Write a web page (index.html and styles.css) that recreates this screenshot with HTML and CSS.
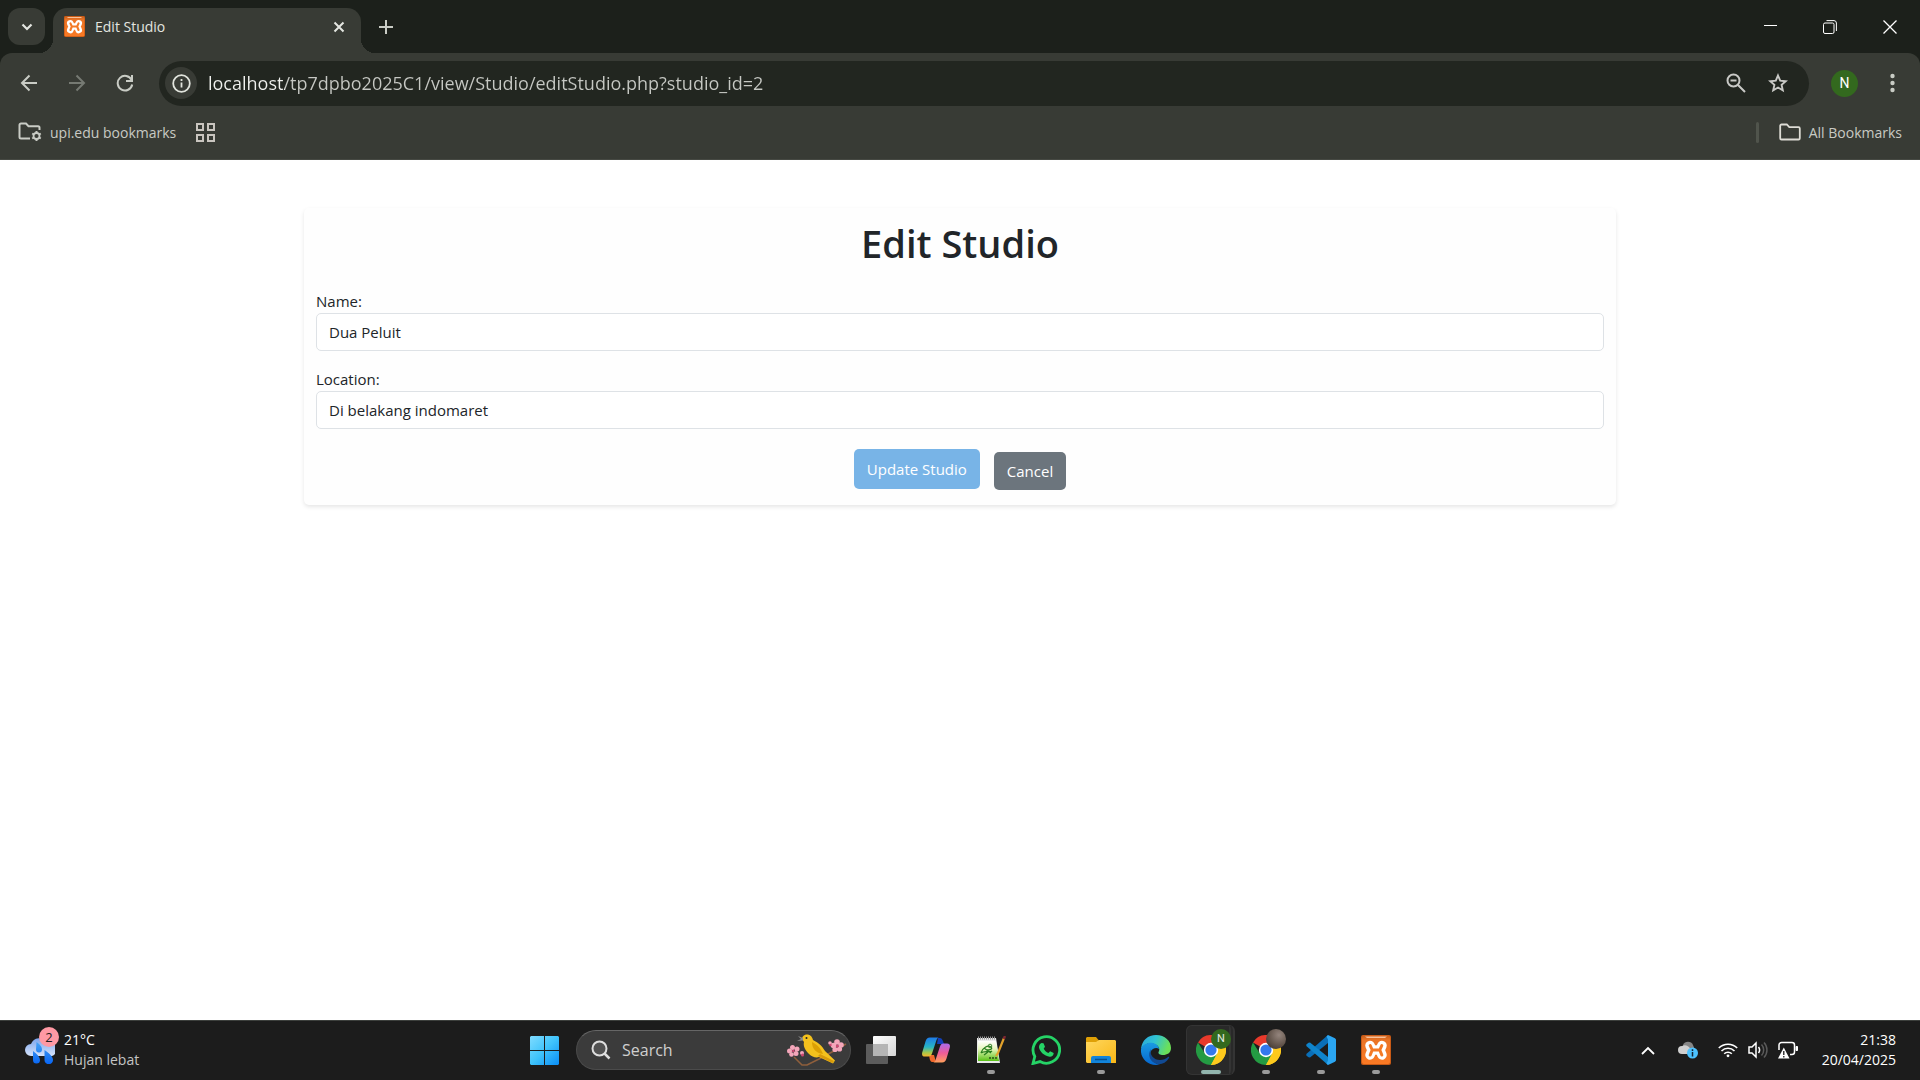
FILE: index.html
```html
<!DOCTYPE html>
<html lang="en">
<head>
<meta charset="utf-8">
<meta name="viewport" content="width=device-width, initial-scale=1">
<title>Edit Studio</title>
<link rel="stylesheet" href="styles.css">
</head>
<body>
<svg class="defs" width="0" height="0" aria-hidden="true">
  <defs>
    <linearGradient id="xampp-bg" x1="0" y1="0" x2="0" y2="1"><stop offset="0" stop-color="#c9601c"/><stop offset=".15" stop-color="#ea7426"/><stop offset="1" stop-color="#fb7a24"/></linearGradient>
    <symbol id="xampp" viewBox="0 0 30 30">
      <rect width="30" height="30" rx="2" fill="#c85a16"/>
      <rect x="1" y="1" width="28" height="28" rx="2" fill="url(#xampp-bg)"/>
      <path d="M4 1.500h22l-2 1.500H6z" fill="#f7c09a"/>
      <g fill="none" stroke-linecap="round" stroke-linejoin="round">
        <path d="M9 10.500l2 4.500-2 5M21 10.500l-2 4.500 2 5M11 15h8" stroke="#fff" stroke-width="9.500"/>
        <path d="M9.200 10.500l2 4.500-2 5M20.800 10.500l-2 4.500 2 5M11 15h8" stroke="#f47a26" stroke-width="3"/>
      </g>
    </symbol>
    <symbol id="chrome" viewBox="0 0 30 30">
      <path d="M15 15L2 7.500A15 15 0 0 1 28 7.500z" fill="#e8392b"/>
      <path d="M15 15H28.700L28 7.500A15 15 0 0 1 15 30z" fill="#fdc91d"/>
      <path d="M8.900 18.500L2 7.500A15 15 0 0 0 15 30L21.500 18.500z" fill="#249b43"/>
      <path d="M15 8h13.200A15 15 0 0 1 15 30l6.100-11.500z" fill="#fdc91d"/>
      <circle cx="15" cy="15" r="7.200" fill="#fff"/>
      <circle cx="15" cy="15" r="5.600" fill="#3478ec"/>
    </symbol>
  </defs>
</svg>
<div class="screen">
  <header class="browser">
    <div class="tabstrip">
      <button class="tab-search" aria-label="Search tabs"><svg width="12" height="8" viewBox="0 0 12 8"><path d="M1.500 1.500L6 6l4.500-4.500" fill="none" stroke="#e4e6e1" stroke-width="2.200"/></svg></button>
      <div class="tab">
        <svg width="21" height="21"><use href="#xampp"/></svg>
        <span class="tab-title">Edit Studio</span>
        <button class="bare" aria-label="Close tab"><svg width="12" height="12" viewBox="0 0 12 12"><path d="M1.500 1.500l9 9m0-9l-9 9" stroke="#e4e6e1" stroke-width="2"/></svg></button>
      </div>
      <button class="bare new-tab" aria-label="New tab"><svg width="14" height="14" viewBox="0 0 14 14"><path d="M7 0v14M0 7h14" stroke="#c9ccc5" stroke-width="2"/></svg></button>
      <div class="window-controls">
        <button class="bare" aria-label="Minimize"><svg width="13" height="14" viewBox="0 0 13 14"><path d="M0 5.500h13" stroke="#fff"/></svg></button>
        <button class="bare" aria-label="Restore"><svg width="14" height="14" viewBox="0 0 14 14" fill="none" stroke="#fff"><rect x=".5" y="3" width="10.500" height="10.500" rx="1.500"/><path d="M3.500.6H11A2.500 2.500 0 0 1 13.400 3v8"/></svg></button>
        <button class="bare" aria-label="Close"><svg width="14" height="14" viewBox="0 0 14 14"><path d="M.5.500l13 13m0-13l-13 13" stroke="#fff" stroke-width="1.300"/></svg></button>
      </div>
    </div>
    <div class="toolbar">
      <nav class="nav-buttons">
        <button class="bare" aria-label="Back"><svg width="18" height="18" viewBox="0 0 18 18"><path d="M17 9H2M9.500 1.500L2 9l7.500 7.500" fill="none" stroke="#c9ccc5" stroke-width="2"/></svg></button>
        <button class="bare" aria-label="Forward"><svg width="18" height="18" viewBox="0 0 18 18"><path d="M1 9h15M8.500 1.500L16 9l-7.500 7.500" fill="none" stroke="#767a73" stroke-width="2"/></svg></button>
        <button class="bare" aria-label="Reload"><svg width="18" height="18" viewBox="0 0 18 18"><path d="M15.600 6A7.300 7.300 0 1 0 16.200 10.500M16 1v6h-6" fill="none" stroke="#c9ccc5" stroke-width="2"/></svg></button>
      </nav>
      <div class="omnibox">
        <button class="site-info" aria-label="Site information"><svg width="19" height="19" viewBox="0 0 19 19"><circle cx="9.500" cy="9.500" r="8.300" fill="none" stroke="#e1e4dd" stroke-width="1.800"/><path d="M9.500 8.500v5M9.500 5v2" stroke="#e1e4dd" stroke-width="1.800"/></svg></button>
        <input class="url" type="text" aria-label="Address" value="localhost/tp7dpbo2025C1/view/Studio/editStudio.php?studio_id=2">
        <button class="bare" aria-label="Zoom"><svg width="20" height="20" viewBox="0 0 20 20" fill="none" stroke="#c9c9c6" stroke-width="2"><circle cx="7.500" cy="7.500" r="6"/><path d="M12 12l7 7M4.500 7.500h6"/></svg></button>
        <button class="bare" aria-label="Bookmark this tab"><svg width="20" height="20" viewBox="0 0 20 20"><path d="M10 2.500l2.200 5.200 5.600.5-4.200 3.700 1.200 5.500L10 14.500l-4.800 2.900 1.200-5.500L2.200 8.200l5.600-.5z" fill="none" stroke="#c9c9c6" stroke-width="1.900"/></svg></button>
      </div>
      <button class="avatar" aria-label="Profile">N</button>
      <button class="bare" aria-label="Menu"><svg width="5" height="20" viewBox="0 0 5 20" fill="#c9ccc5"><circle cx="2.500" cy="3" r="2.200"/><circle cx="2.500" cy="10" r="2.200"/><circle cx="2.500" cy="17" r="2.200"/></svg></button>
    </div>
    <div class="bookmarks">
      <a href="#" class="bookmark"><svg width="24" height="20" viewBox="0 0 24 20"><path d="M12 16.500H3A1.500 1.500 0 0 1 1.500 15V3A1.500 1.500 0 0 1 3 1.500h5l2.500 2.700H20A1.500 1.500 0 0 1 21.500 6v2" fill="none" stroke="#c9ccc5" stroke-width="2"/><circle cx="18.500" cy="14" r="3" fill="none" stroke="#c9ccc5" stroke-width="1.800"/><path d="M18.500 9v2M18.500 17v2M14.200 11.500l1.700 1M21.100 15.500l1.700 1M14.200 16.500l1.700-1M21.100 12.500l1.700-1" stroke="#c9ccc5" stroke-width="2"/></svg>upi.edu bookmarks</a>
      <a href="#" class="bookmark" aria-label="Apps"><svg width="19" height="19" viewBox="0 0 19 19" fill="none" stroke="#c9c5bf" stroke-width="2"><path d="M1 1h6v6H1zM12 1h6v6h-6zM1 12h6v6H1zM12 12h6v6h-6z"/></svg></a>
      <span class="divider"></span>
      <a href="#" class="bookmark"><svg width="22" height="18" viewBox="0 0 22 18"><path d="M2.500 1.500h5.300l2.500 2.700h9.200a1.300 1.300 0 0 1 1.300 1.300v9.700a1.300 1.300 0 0 1-1.300 1.300h-17a1.300 1.300 0 0 1-1.300-1.300V2.800a1.300 1.300 0 0 1 1.300-1.300z" fill="none" stroke="#dddcd5" stroke-width="1.800"/></svg>All Bookmarks</a>
    </div>
  </header>

  <main class="page">
    <form class="card">
      <h1>Edit Studio</h1>
      <div class="field"><label for="name">Name:</label><input id="name" type="text" value="Dua Peluit"></div>
      <div class="field"><label for="location">Location:</label><input id="location" type="text" value="Di belakang indomaret"></div>
      <div class="actions"><button type="button" class="btn btn-update">Update Studio</button><a href="#" class="btn btn-cancel">Cancel</a></div>
    </form>
  </main>

  <footer class="taskbar">
    <button class="weather">
      <span class="weather-icon"><svg width="30" height="28" viewBox="0 0 30 28"><defs><linearGradient id="drop" x1="0" y1="0" x2="0" y2="1"><stop offset="0" stop-color="#48a3f4"/><stop offset="1" stop-color="#0866f5"/></linearGradient><linearGradient id="cloud" x1="0" y1="0" x2="0" y2="1"><stop offset="0" stop-color="#7ba5ed"/><stop offset="1" stop-color="#d5e3fa"/></linearGradient></defs><path d="M6 20a6 6 0 0 1 0-12A9 9 0 0 1 22 6.500 7 7 0 0 1 27 20z" fill="url(#cloud)"/><path d="M11.500 6c4 3 5.500 5 5.500 7.500a3 3 0 0 1-6 0zM8 15c4 3 7 6 7 9a3.500 3.500 0 0 1-7 0zM19.500 14c5 3 8.500 7 8.500 10a4.200 4.200 0 0 1-8.500 0z" fill="url(#drop)"/></svg><span class="badge">2</span></span>
      <span class="two-lines"><span>21°C</span><span class="muted">Hujan lebat</span></span>
    </button>

    <div class="apps">
      <button class="app" aria-label="Start"><svg width="29" height="29" viewBox="0 0 29 29"><defs><linearGradient id="win" x1="0" y1="0" x2="1" y2="1"><stop offset="0" stop-color="#7fdcff"/><stop offset=".5" stop-color="#3fc3fb"/><stop offset="1" stop-color="#0a8df5"/></linearGradient></defs><path d="M1 0h13v14H0V1zM15 0h13l1 1v13H15zM0 15h14v14H1l-1-1zM15 15h14v13l-1 1H15z" fill="url(#win)"/></svg></button>
      <div class="search">
        <svg width="20" height="20" viewBox="0 0 20 20" fill="none" stroke="#dedede" stroke-width="2"><circle cx="8.500" cy="8.500" r="7" fill="#525252"/><path d="M13.500 13.500l5 5" stroke-width="2.500"/></svg>
        <input type="search" placeholder="Search" aria-label="Search">
        <svg width="60" height="34" viewBox="0 0 60 34">
          <path d="M7 24l4 4 4 4h5l12-6 13-7 14-8" fill="none" stroke="#8f5f3c" stroke-width="1.600"/>
          <path d="M15 6c0-3 3-5 6-4.500 3 .5 4.500 3 5 5.500 6 3 9 6 12 11l10 9.500-2 3L32 24c-3 1-7 0-10-3-4-4-6-8-5-12z" fill="#f4c11d"/>
          <path d="M25 9c6 3 9 7 11 12-7-1-11-5-11-12z" fill="#dca004"/><path d="M33 21l14 7-1.500 2L31 23z" fill="#d99b0b"/>
          <path d="M16 5l-5-2 3 3-4 2 6-.5z" fill="#8d8d8d"/><circle cx="19.500" cy="5" r="1" fill="#222"/>
          <g fill="#f4a6ba"><circle cx="5.500" cy="14.500" r="2.500"/><circle cx="10" cy="16" r="2.500"/><circle cx="2.500" cy="18" r="2.500"/><circle cx="9" cy="20.500" r="2.500"/><circle cx="4.500" cy="21.500" r="2.300"/><circle cx="15" cy="20" r="2"/><circle cx="50" cy="9" r="2.800"/><circle cx="54" cy="12" r="2.800"/><circle cx="46.500" cy="12.500" r="2.800"/><circle cx="52.500" cy="16" r="2.600"/><circle cx="48" cy="16.500" r="2.600"/><circle cx="43" cy="10" r="1.800"/></g>
          <g fill="#cf4773"><circle cx="6.300" cy="18" r="1.300"/><circle cx="50.300" cy="13" r="1.500"/><circle cx="15.500" cy="22" r="1.500"/><circle cx="43.500" cy="12" r="1.200"/></g>
        </svg>
      </div>
      <button class="app" aria-label="Task view"><svg width="30" height="28" viewBox="0 0 30 28"><defs><linearGradient id="pane" x1="0" y1="0" x2="1" y2="1"><stop offset="0" stop-color="#fff"/><stop offset="1" stop-color="#d5d5d5"/></linearGradient></defs><rect y="8" width="22" height="20" rx="1" fill="#5c5c5c"/><rect x="7" width="23" height="20" rx="1" fill="url(#pane)"/><path d="M7 8h15v12H7z" fill="#b5b5b5"/></svg></button>
      <button class="app" aria-label="Copilot"><svg width="28" height="26" viewBox="0 0 28 26"><defs><linearGradient id="cp1" x1="0" y1="0" x2="0" y2="1"><stop offset="0" stop-color="#1e7bea"/><stop offset=".5" stop-color="#27b5c4"/><stop offset=".8" stop-color="#a9c84a"/><stop offset="1" stop-color="#f7b52c"/></linearGradient><linearGradient id="cp2" x1="0" y1="0" x2="0" y2="1"><stop offset="0" stop-color="#ab6bea"/><stop offset=".5" stop-color="#ee5b98"/><stop offset="1" stop-color="#ffa05b"/></linearGradient></defs><path d="M16 1h2c2 0 3 3 4 6h-7z" fill="#123fb8"/><path d="M7 18h5l2 7h-4c-2 0-2.500-4-3-7z" fill="#f0682c"/><path d="M8 .5h9c-1.500 0-2.500 2-3 4l-4 12c-.7 2-1.500 3-3.500 3H3c-3 0-3.500-2-2.500-5l3-10C4.300 1.800 5.500.5 8 .5z" fill="url(#cp1)"/><path d="M20 25.500h-9c1.500 0 2.500-2 3-4l4-12c.7-2 1.500-3 3.500-3H25c3 0 3.500 2 2.500 5l-3 10c-.8 2.700-2 4-4.500 4z" fill="url(#cp2)"/></svg></button>
      <button class="app open" aria-label="Notepad++"><svg width="30" height="28" viewBox="0 0 30 28"><defs><linearGradient id="np" x1="0" y1="0" x2="0" y2="1"><stop offset="0" stop-color="#fff"/><stop offset=".4" stop-color="#e7f6bd"/><stop offset="1" stop-color="#58c115"/></linearGradient></defs><path d="M1 2h19l4 25H1z" fill="#e9e9e9"/><path d="M2 5h18l3 20H2z" fill="url(#np)"/><path d="M2 2h18" stroke="#999" stroke-width="3" stroke-dasharray="1 1"/><path d="M5 17c2-6 7-8 10-6 2 2-1 3-4 3M5 17c4-3 9 0 11-2M8 19l4-3M8 12l7 5" fill="none" stroke="#277d1e" stroke-width="1.300"/><circle cx="14" cy="10" r="1.800" fill="none" stroke="#3f8a35"/><path d="M13 22h8" stroke="#3f6d22" stroke-width="2" stroke-dasharray="2 1"/><path d="M28 2l-6 15-2 3" fill="none" stroke="#e2a12b" stroke-width="2.200"/><path d="M29 0l-1.200 3" stroke="#7c2632" stroke-width="2.500"/></svg></button>
      <button class="app" aria-label="WhatsApp"><svg width="30" height="30" viewBox="0 0 30 30"><path d="M2 28.500l1.800-7A13.300 13.300 0 1 1 9 26.600z" fill="none" stroke="#25d366" stroke-width="2.800"/><path d="M10.500 8l2 .2 1.500 3.600-1.300 2c1 2 2.500 3.300 4.700 4.200l1.700-1.800 3.600 1.700c0 2.500-2 4-4 3.800-5.500-.7-10-5-10.700-9.200-.2-1.800.8-3.800 2.500-4.500z" fill="#25d366"/></svg></button>
      <button class="app open" aria-label="File Explorer"><svg width="30" height="26" viewBox="0 0 30 26"><defs><linearGradient id="fold" x1="0" y1="0" x2="1" y2="1"><stop offset="0" stop-color="#ffd75e"/><stop offset="1" stop-color="#f9b716"/></linearGradient></defs><path d="M1 0h9l3 3.500V8H0V1z" fill="#dfa006"/><path d="M0 5h10l3-2h16l1 1v22H1l-1-1z" fill="url(#fold)"/><path d="M5 26v-5a2 2 0 0 1 2-2h16a2 2 0 0 1 2 2v5z" fill="#1284da"/><path d="M9 22.500h12" stroke="#07508f" stroke-width="1.500"/></svg></button>
      <button class="app" aria-label="Edge"><svg width="30" height="30" viewBox="0 0 30 30"><defs><linearGradient id="e1" x1="0" y1="0" x2="1" y2=".3"><stop offset="0" stop-color="#2aa5dd"/><stop offset=".5" stop-color="#30c3d3"/><stop offset="1" stop-color="#6be058"/></linearGradient><linearGradient id="e2" x1="0" y1="0" x2="0" y2="1"><stop offset="0" stop-color="#1a9be2"/><stop offset="1" stop-color="#0667cf"/></linearGradient></defs><path d="M0 14C1 5 7 0 15 0c9 0 15 6 15 13 0 5-4 7-8 7-3 0-5-1-4.500-3 1.500-2 1-5-2-7-5-3-12-2-15.500 4z" fill="url(#e1)"/><path d="M0 14c2-5 7-7 12-6 4 1 6 4 6 6-2-2-7-1-8.500 3C8 22 13 29 19 29.500 8 32-1 24 0 14z" fill="url(#e2)"/><path d="M10 14c-2 6 3 11 9 11 3 0 6-1 8-3 1-.5 1.500 0 1 1-3 5-8 7-12 6C9 27 6 20 10 14z" fill="#114a93"/></svg></button>
      <button class="app open active" aria-label="Chrome, profile N"><svg width="30" height="30"><use href="#chrome"/></svg><span class="profile">N</span></button>
      <button class="app open" aria-label="Chrome, second profile"><svg width="30" height="30"><use href="#chrome"/></svg><span class="profile photo"></span></button>
      <button class="app open" aria-label="Visual Studio Code"><svg width="30" height="30" viewBox="0 0 30 30"><path d="M22 0v8L4 22.500l-1.500-.2L.3 20.500V19z" fill="#0a6fb8"/><path d="M22 30v-8L4 7.500l-1.500.2L.3 9.500V11z" fill="#0f84cc"/><path d="M22 0l7 3.200 1 1.300v21l-1 1.300L22 30l-1.500-1.500 1.500-3V4.500l-1.500-3z" fill="#2ba6f2"/></svg></button>
      <button class="app open" aria-label="XAMPP"><svg width="30" height="30"><use href="#xampp"/></svg></button>
    </div>

    <div class="tray">
      <button class="bare" aria-label="Show hidden icons"><svg width="14" height="9" viewBox="0 0 14 9"><path d="M1 8l6-6 6 6" fill="none" stroke="#fff" stroke-width="1.800"/></svg></button>
      <button class="bare cloud" aria-label="OneDrive"><svg width="20" height="18" viewBox="0 0 20 18"><path d="M5 4a5.500 5.500 0 0 1 10 0l2 5-12 3z" fill="#858585"/><path d="M4 13a4 4 0 0 1 0-8 6 6 0 0 1 7 1l5 7z" fill="#cfcfcf"/><circle cx="14.500" cy="12" r="5.500" fill="#4cc2ff"/><path d="M14.500 11v4.500M14.500 8.300V10" stroke="#123" stroke-width="1.500"/></svg></button>
      <button class="bare status" aria-label="Network, sound and battery">
        <svg width="20" height="16" viewBox="0 0 20 16" fill="none" stroke="#fff" stroke-width="1.600"><path d="M.8 6a13 13 0 0 1 18.400 0M3.500 9a9.200 9.200 0 0 1 13 0M6.200 11.800a5.400 5.400 0 0 1 7.600 0"/><circle cx="10" cy="13.800" r="1.400" fill="#fff" stroke="none"/></svg>
        <svg width="20" height="18" viewBox="0 0 20 18" fill="none" stroke="#fff" stroke-width="1.500"><path d="M1 6h3l4-4v14l-4-4H1zM10.500 6a5 5 0 0 1 0 6"/><path d="M13.500 3.500a8 8 0 0 1 0 11M16 1.500a11 11 0 0 1 0 15" stroke="#5a5a5a"/></svg>
        <svg width="20" height="18" viewBox="0 0 20 18"><path d="M1 9V4a2.500 2.500 0 0 1 2.500-2.500H14A2.500 2.500 0 0 1 16.500 4v7a2.500 2.500 0 0 1-2.500 2.500h-2" fill="none" stroke="#fff" stroke-width="1.500"/><path d="M18 5.500h1.500v4H18z" fill="#fff" stroke="#fff"/><path d="M5.800 6.500L11.500 17.500H0z" fill="#fff"/><path d="M5.800 10v4M5.800 15v1.500" stroke="#1c1c1c" stroke-width="1.300"/></svg>
      </button>
      <button class="clock two-lines"><span>21:38</span><span>20/04/2025</span></button>
    </div>
  </footer>
</div>
</body>
</html>
```
FILE: styles.css
```css
* { box-sizing: border-box; }

body {
  margin: 0;
  font-family: "Open Sans", "Noto Sans", sans-serif;
  font-size: 15px;
  color: #212529;
  background: #fff;
}

button, input { font: inherit; }
button { cursor: pointer; }
svg { display: block; flex: none; }
.defs { position: absolute; }

.screen { display: flex; flex-direction: column; min-height: 100vh; }

.bare {
  display: flex;
  align-items: center;
  justify-content: center;
  padding: 0;
  border: 0;
  background: none;
}

/* Browser frame */
.browser { background: #1c201b; color: #e3e5e0; }

.tabstrip { display: flex; height: 53px; padding: 8px 0 0 8px; }

.tab-search {
  display: flex;
  align-items: center;
  justify-content: center;
  width: 37px;
  height: 37px;
  padding: 0;
  border: 0;
  border-radius: 12px;
  background: #383b35;
}

.tab {
  position: relative;
  display: flex;
  align-items: center;
  gap: 10px;
  width: 308px;
  height: 45px;
  margin-left: 8px;
  padding: 0 16px 8px 11px;
  border-radius: 14px 14px 0 0;
  background: #383b35;
  font-size: 14px;
}

.tab::before, .tab::after {
  content: "";
  position: absolute;
  bottom: 0;
  width: 14px;
  height: 14px;
}
.tab::before { right: 100%; background: radial-gradient(circle at 0 0, transparent 14px, #383b35 14px); }
.tab::after { left: 100%; background: radial-gradient(circle at 100% 0, transparent 14px, #383b35 14px); }

.tab-title { flex: 1; line-height: 20px; }
.new-tab { width: 50px; height: 37px; }

.window-controls { display: flex; height: 37px; margin-left: auto; }
.window-controls .bare { width: 60px; }

.toolbar {
  display: flex;
  align-items: center;
  height: 60px;
  padding: 0 25px 0 20px;
  border-radius: 12px 12px 0 0;
  background: #383b35;
}

.nav-buttons { display: flex; gap: 30px; padding-right: 25px; }

.omnibox {
  display: flex;
  flex: 1;
  align-items: center;
  gap: 22px;
  height: 45px;
  padding: 0 21px 0 6px;
  border-radius: 23px;
  background: #222620;
}

.site-info {
  display: flex;
  align-items: center;
  justify-content: center;
  width: 32px;
  height: 32px;
  padding: 0;
  border: 0;
  border-radius: 50%;
  background: #383b35;
}

/* The host part of the address is brighter than the path */
.url {
  flex: 1;
  min-width: 0;
  margin-left: -11px;
  padding: 0;
  border: 0;
  outline: 0;
  background: linear-gradient(90deg, #f0f1ee 77px, #c6c8c3 77px);
  background-clip: text;
  -webkit-background-clip: text;
  color: transparent;
  font-size: 18px;
}

.avatar {
  width: 27px;
  height: 27px;
  margin: 0 32px 0 22px;
  padding: 0;
  border: 0;
  border-radius: 50%;
  background: #33691e;
  color: #fff;
  font-family: Roboto, sans-serif;
  font-size: 14px;
}

.bookmarks {
  display: flex;
  align-items: center;
  gap: 20px;
  height: 47px;
  padding: 0 18px 8px;
  border-bottom: 1px solid #464943;
  background: #383b35;
  font-size: 14px;
}
.bookmark { display: flex; align-items: center; gap: 8px; color: #c8cac4; text-decoration: none; }
.divider { width: 3px; height: 21px; margin-left: auto; border-radius: 2px; background: #50544c; }

/* Studio form */
.page { flex: 1; padding: 48px 24px; }

.card {
  max-width: 1312px;
  margin: 0 auto;
  padding: 12px 12px 15px;
  border-radius: 5px;
  background: #fefefe;
  box-shadow: 0 2px 4px rgba(0, 0, 0, .1);
}
.card h1 { margin: 0 0 23px; font-size: 38px; font-weight: 600; line-height: 46px; text-align: center; }

.field { margin-bottom: 16px; }
.field label { display: block; line-height: 24px; }
.field input {
  display: block;
  width: 100%;
  height: 38px;
  padding: 0 12px;
  border: 1px solid #dee2e6;
  border-radius: 5px;
  background: #fff;
  color: #212529;
}

.actions { display: flex; align-items: flex-start; justify-content: center; gap: 14px; padding-top: 4px; }
.btn { padding: 0 13px; border: 0; border-radius: 5px; color: #fff; text-decoration: none; white-space: nowrap; }
.btn-update { height: 40px; background: #78b4e7; }
.btn-cancel { height: 38px; margin-top: 3px; background: #6c757d; line-height: 38px; }

/* Taskbar */
.taskbar {
  display: grid;
  grid-template-columns: 1fr auto 1fr;
  align-items: center;
  height: 60px;
  box-shadow: inset 0 1px #3c3f3c;
  background: #1c1c1c;
  color: #fff;
  font-size: 14px;
}

.weather {
  display: flex;
  align-items: center;
  gap: 9px;
  justify-self: start;
  padding: 0 0 0 25px;
  border: 0;
  background: none;
  color: inherit;
}
.weather-icon { position: relative; }
.badge {
  position: absolute;
  top: -9px;
  left: 14px;
  width: 20px;
  height: 20px;
  border-radius: 50%;
  background: #ff99a4;
  color: #1c1c1c;
  font-size: 13px;
  line-height: 20px;
  text-align: center;
}
.two-lines { display: flex; flex-direction: column; line-height: 20px; text-align: left; }
.muted { color: #c4c4c4; }

.apps { display: flex; align-items: center; }
.app {
  position: relative;
  display: flex;
  align-items: center;
  justify-content: center;
  width: 55px;
  height: 50px;
  padding: 0;
  border: 0;
  background: none;
}
.app.open::after {
  content: "";
  position: absolute;
  bottom: 1px;
  left: calc(50% - 4px);
  width: 8px;
  height: 4px;
  border-radius: 2px;
  background: #9a9a9a;
}
.app.active::before {
  content: "";
  position: absolute;
  inset: 0 3px;
  border: 1px solid #343434;
  border-right: 6px double #343434;
  border-radius: 6px;
  background: #292929;
}
.app.active::after { left: calc(50% - 10px); width: 20px; background: #92b5ae; }
.app svg { position: relative; }

.profile {
  position: absolute;
  top: 4px;
  left: 28px;
  width: 20px;
  height: 20px;
  border-radius: 50%;
  background: #33691e;
  color: #e8ece5;
  font-family: Roboto, sans-serif;
  font-size: 11px;
  line-height: 20px;
  text-align: center;
}
.photo { background: radial-gradient(circle at 65% 30%, #94857d, #65574e 50%, #352c26); }

.search {
  display: flex;
  align-items: center;
  width: 275px;
  height: 40px;
  margin: 0 2px 0 4px;
  padding: 0 3px 0 14px;
  border: 1px solid #4b4b4b;
  border-top-color: #666;
  border-radius: 20px;
  background: #3b3b3b;
}
.search input {
  flex: 1;
  min-width: 0;
  padding: 0 0 0 11px;
  border: 0;
  outline: 0;
  background: none;
  color: #fff;
  font-size: 16px;
}
.search input::placeholder { color: #cfcfcf; }

.tray { display: flex; align-items: center; justify-self: end; padding-right: 24px; }
.cloud { margin: 0 20px 0 23px; }
.status { gap: 10px; }
.clock { padding: 0 0 0 24px; border: 0; background: none; color: inherit; text-align: right; }
```
